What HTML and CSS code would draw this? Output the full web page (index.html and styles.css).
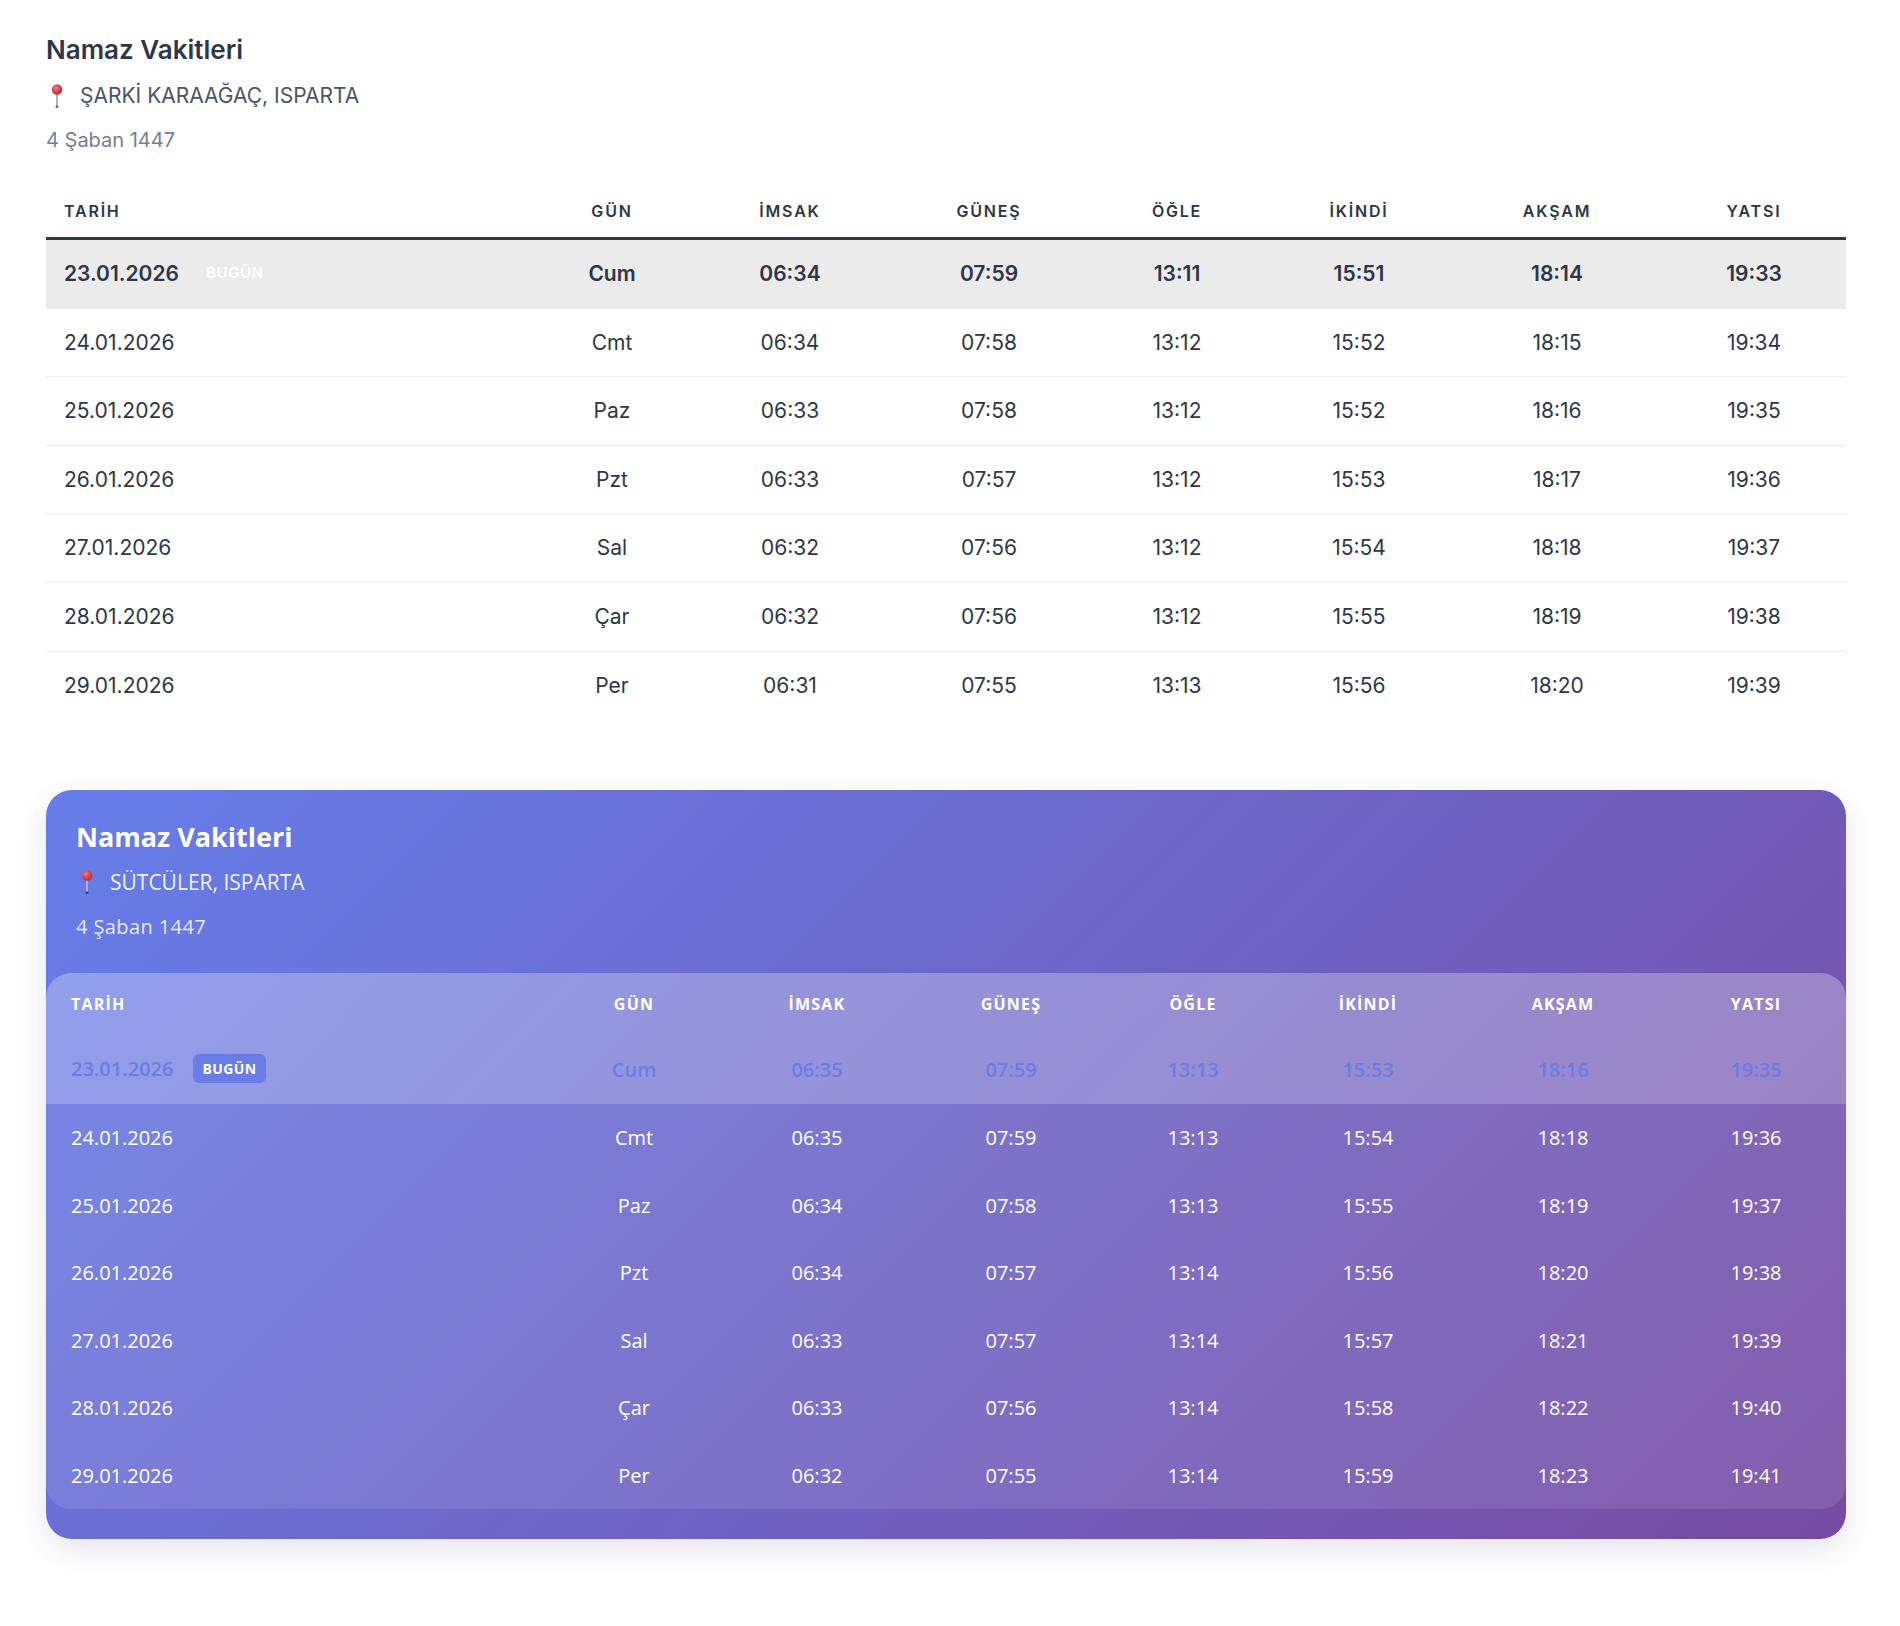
FILE: index.html
```html
<!DOCTYPE html>
<html lang="tr">
<head>
<meta charset="utf-8">
<title>Namaz Vakitleri</title>
<link rel="stylesheet" href="styles.css">
</head>
<body>
<main class="page">

  <section class="plain">
    <h2 class="title">Namaz Vakitleri</h2>
    <div class="location">
      <svg class="pin" viewBox="0 0 22 26" aria-hidden="true">
        <defs>
          <radialGradient id="pinA" cx="0.38" cy="0.35" r="0.7">
            <stop offset="0" stop-color="#f27b85"/>
            <stop offset="0.6" stop-color="#d9414f"/>
            <stop offset="1" stop-color="#b02a38"/>
          </radialGradient>
        </defs>
        <rect x="10.1" y="10" width="1.8" height="14" fill="#a9adb3"/>
        <rect x="9.7" y="22.5" width="2.6" height="2.5" fill="#6b6f75"/>
        <circle cx="11" cy="6.5" r="5.3" fill="url(#pinA)"/>
      </svg>
      <span>ŞARKİ KARAAĞAÇ, ISPARTA</span>
    </div>
    <div class="hijri">4 Şaban 1447</div>

    <table class="times times-plain">
      <colgroup>
        <col class="p-c1"><col class="p-c2"><col class="p-c3"><col class="p-c4"><col class="p-c5"><col class="p-c6"><col class="p-c7"><col class="p-c8">
      </colgroup>
      <thead>
        <tr><th class="left">Tarih</th><th>Gün</th><th>İmsak</th><th>Güneş</th><th>Öğle</th><th>İkindi</th><th>Akşam</th><th>Yatsı</th></tr>
      </thead>
      <tbody>
        <tr class="today"><td class="left">23.01.2026<span class="badge">Bugün</span></td><td>Cum</td><td>06:34</td><td>07:59</td><td>13:11</td><td>15:51</td><td>18:14</td><td>19:33</td></tr>
        <tr><td class="left">24.01.2026</td><td>Cmt</td><td>06:34</td><td>07:58</td><td>13:12</td><td>15:52</td><td>18:15</td><td>19:34</td></tr>
        <tr><td class="left">25.01.2026</td><td>Paz</td><td>06:33</td><td>07:58</td><td>13:12</td><td>15:52</td><td>18:16</td><td>19:35</td></tr>
        <tr><td class="left">26.01.2026</td><td>Pzt</td><td>06:33</td><td>07:57</td><td>13:12</td><td>15:53</td><td>18:17</td><td>19:36</td></tr>
        <tr><td class="left">27.01.2026</td><td>Sal</td><td>06:32</td><td>07:56</td><td>13:12</td><td>15:54</td><td>18:18</td><td>19:37</td></tr>
        <tr><td class="left">28.01.2026</td><td>Çar</td><td>06:32</td><td>07:56</td><td>13:12</td><td>15:55</td><td>18:19</td><td>19:38</td></tr>
        <tr><td class="left">29.01.2026</td><td>Per</td><td>06:31</td><td>07:55</td><td>13:13</td><td>15:56</td><td>18:20</td><td>19:39</td></tr>
      </tbody>
    </table>
  </section>

  <section class="card">
    <div class="card-head">
      <h2 class="title">Namaz Vakitleri</h2>
      <div class="location">
        <svg class="pin" viewBox="0 0 22 26" aria-hidden="true">
          <defs>
            <radialGradient id="pinB" cx="0.38" cy="0.35" r="0.7">
              <stop offset="0" stop-color="#f27b85"/>
              <stop offset="0.6" stop-color="#d9414f"/>
              <stop offset="1" stop-color="#b02a38"/>
            </radialGradient>
          </defs>
          <rect x="10.1" y="10" width="1.8" height="14" fill="#b4b8be"/>
          <rect x="9.7" y="22.5" width="2.6" height="2.5" fill="#3f4247"/>
          <circle cx="11" cy="6.5" r="5.3" fill="url(#pinB)"/>
        </svg>
        <span>SÜTCÜLER, ISPARTA</span>
      </div>
      <div class="hijri">4 Şaban 1447</div>
    </div>

    <div class="table-wrap">
      <table class="times times-card">
        <colgroup>
          <col class="c-c1"><col class="c-c2"><col class="c-c3"><col class="c-c4"><col class="c-c5"><col class="c-c6"><col class="c-c7"><col class="c-c8">
        </colgroup>
        <thead>
          <tr><th class="left">Tarih</th><th>Gün</th><th>İmsak</th><th>Güneş</th><th>Öğle</th><th>İkindi</th><th>Akşam</th><th>Yatsı</th></tr>
        </thead>
        <tbody>
          <tr class="today"><td class="left">23.01.2026<span class="badge">Bugün</span></td><td>Cum</td><td>06:35</td><td>07:59</td><td>13:13</td><td>15:53</td><td>18:16</td><td>19:35</td></tr>
          <tr><td class="left">24.01.2026</td><td>Cmt</td><td>06:35</td><td>07:59</td><td>13:13</td><td>15:54</td><td>18:18</td><td>19:36</td></tr>
          <tr><td class="left">25.01.2026</td><td>Paz</td><td>06:34</td><td>07:58</td><td>13:13</td><td>15:55</td><td>18:19</td><td>19:37</td></tr>
          <tr><td class="left">26.01.2026</td><td>Pzt</td><td>06:34</td><td>07:57</td><td>13:14</td><td>15:56</td><td>18:20</td><td>19:38</td></tr>
          <tr><td class="left">27.01.2026</td><td>Sal</td><td>06:33</td><td>07:57</td><td>13:14</td><td>15:57</td><td>18:21</td><td>19:39</td></tr>
          <tr><td class="left">28.01.2026</td><td>Çar</td><td>06:33</td><td>07:56</td><td>13:14</td><td>15:58</td><td>18:22</td><td>19:40</td></tr>
          <tr><td class="left">29.01.2026</td><td>Per</td><td>06:32</td><td>07:55</td><td>13:14</td><td>15:59</td><td>18:23</td><td>19:41</td></tr>
        </tbody>
      </table>
    </div>
  </section>

</main>
</body>
</html>
```
FILE: styles.css
```css
* { box-sizing: border-box; }

html, body {
  margin: 0;
  padding: 0;
  background: #ffffff;
}

.page {
  width: 1800px;
  margin-left: 46px;
  padding: 33px 0 80px;
}

/* ---------- shared ---------- */
.title {
  margin: 0;
  font-size: 28px;
  line-height: 34px;
}

.location {
  display: flex;
  align-items: center;
  font-size: 21px;
  line-height: 30px;
}

.pin {
  width: 22px;
  height: 26px;
  margin-right: 12px;
  flex: none;
}

.hijri {
  font-size: 20px;
  line-height: 27px;
}

.times {
  width: 1800px;
  border-collapse: collapse;
  table-layout: fixed;
}

.times th,
.times td {
  text-align: center;
  white-space: nowrap;
}

.times .left {
  text-align: left;
}

.times th {
  text-transform: uppercase;
}

.badge {
  display: inline-block;
  vertical-align: middle;
  text-transform: uppercase;
  position: relative;
  top: -2px;
}

/* ---------- plain section ---------- */
.plain {
  font-family: "Inter", "Liberation Sans", sans-serif;
  color: #2d3748;
}

.plain .title {
  font-weight: 600;
  font-size: 26px;
  color: #2d3748;
}

.plain .location {
  margin-top: 14px;
  color: #4a5568;
}

.plain .hijri {
  margin-top: 16px;
  color: #718096;
}

.times-plain {
  margin-top: 31px;
}

.p-c1 { width: 488px; }
.p-c2 { width: 156px; }
.p-c3 { width: 200px; }
.p-c4 { width: 198px; }
.p-c5 { width: 178px; }
.p-c6 { width: 186px; }
.p-c7 { width: 210px; }
.p-c8 { width: 184px; }

.times-plain th {
  padding: 17px 18px;
  font-size: 16px;
  line-height: 18px;
  font-weight: 600;
  letter-spacing: 1.8px;
  color: #2d3748;
  border-bottom: 3px solid #2d3748;
}

.times-plain td {
  padding: 19px 18px;
  font-size: 21px;
  line-height: 29.6px;
  color: #2d3748;
  border-bottom: 1px solid #e9ebee;
}

.times-plain tbody tr:last-child td {
  border-bottom: none;
}

.times-plain tr.today td {
  background: #ebebeb;
  font-weight: 600;
  border-bottom-color: #ebebeb;
}

.times-plain .badge {
  margin-left: 18px;
  padding: 4px 9px;
  font-size: 15px;
  line-height: 18px;
  font-weight: 600;
  letter-spacing: 0.6px;
  color: #ffffff;
  background: transparent;
}

/* ---------- gradient card ---------- */
.card {
  margin-top: 71px;
  padding: 30px 0;
  border-radius: 26px;
  background: linear-gradient(135deg, #667eea 0%, #764ba2 100%);
  box-shadow: 0 10px 28px rgba(40, 30, 90, 0.12);
  font-family: "Open Sans", "Liberation Sans", sans-serif;
  color: #ffffff;
}

.card-head {
  padding: 0 30px;
}

.card .title {
  font-weight: 700;
  font-size: 27px;
}

.card .location {
  margin-top: 13px;
  color: rgba(255, 255, 255, 0.92);
}

.card .hijri {
  margin-top: 16px;
  letter-spacing: 0.4px;
  color: rgba(255, 255, 255, 0.85);
}

.table-wrap {
  margin-top: 33px;
  border-radius: 25px;
  overflow: hidden;
  background: rgba(255, 255, 255, 0.1);
}

.c-c1 { width: 500px; }
.c-c2 { width: 176px; }
.c-c3 { width: 190px; }
.c-c4 { width: 198px; }
.c-c5 { width: 166px; }
.c-c6 { width: 184px; }
.c-c7 { width: 206px; }
.c-c8 { width: 180px; }

.times-card thead tr {
  background: rgba(255, 255, 255, 0.2);
}

.times-card th {
  padding: 22px 25px;
  font-size: 16px;
  line-height: 18px;
  font-weight: 700;
  letter-spacing: 1.2px;
  color: #ffffff;
}

.times-card td {
  padding: 19px 25px;
  font-size: 20px;
  line-height: 29.5px;
  color: #ffffff;
}

.times-card tr.today {
  background: rgba(255, 255, 255, 0.2);
}

.times-card tr.today td {
  color: #6a7de6;
  font-weight: 600;
}

.times-card .badge {
  margin-left: 20px;
  padding: 5px 9px;
  border-radius: 6px;
  font-size: 14px;
  line-height: 19px;
  font-weight: 700;
  letter-spacing: 0.4px;
  color: #ffffff;
  background: #6a7de6;
}
```
